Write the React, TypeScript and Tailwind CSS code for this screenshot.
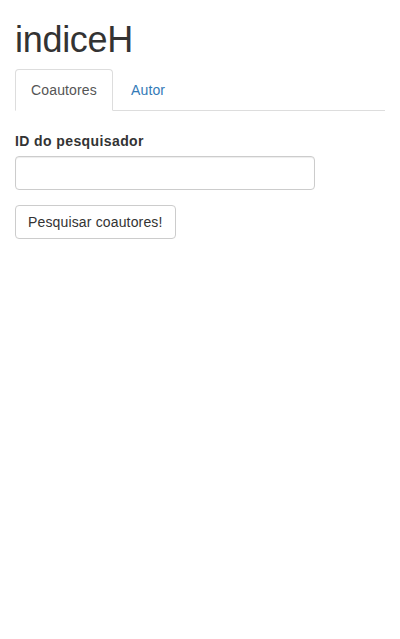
import React, { useState } from "react";

export default function App() {
  const [tab, setTab] = useState("coautores");

  return (
    <div className="min-h-screen bg-white text-[#333] font-['Liberation_Sans',Arial,sans-serif] text-[14px] leading-[20px]">
      <div className="px-[15px]">
        <h1 className="mt-[20px] mb-[10px] text-[36px] leading-[39px] font-normal tracking-[-0.3px]">indiceH</h1>

        {/* Tabs */}
        <ul className="flex border-b border-[#ddd] tracking-[0.15px]">
          <li className="-mb-px mr-[2px]">
            <button
              onClick={() => setTab("coautores")}
              className={
                tab === "coautores"
                  ? "block px-[15px] py-[10px] leading-[20px] rounded-t-[4px] border border-[#ddd] border-b-transparent bg-white text-[#555] cursor-default"
                  : "block px-[15px] py-[10px] leading-[20px] rounded-t-[4px] border border-transparent text-[#337ab7] hover:bg-[#eee]"
              }
            >
              Coautores
            </button>
          </li>
          <li className="-mb-px mr-[2px]">
            <button
              onClick={() => setTab("autor")}
              className={
                tab === "autor"
                  ? "block px-[15px] py-[10px] leading-[20px] rounded-t-[4px] border border-[#ddd] border-b-transparent bg-white text-[#555] cursor-default"
                  : "block px-[15px] py-[10px] leading-[20px] rounded-t-[4px] border border-transparent text-[#337ab7] hover:bg-[#eee]"
              }
            >
              Autor
            </button>
          </li>
        </ul>

        {/* Form */}
        <form className="pt-[20px] tracking-[0.15px]" onSubmit={(e) => e.preventDefault()}>
          <div className="mb-[15px]">
            <label className="block mb-[5px] font-bold tracking-[0.4px]">ID do pesquisador</label>
            <input
              type="text"
              className="block w-[300px] h-[34px] px-[12px] py-[6px] border border-[#ccc] rounded-[4px] shadow-[inset_0_1px_1px_rgba(0,0,0,0.075)] text-[#555] outline-none focus:border-[#66afe9]"
            />
          </div>
          <button
            type="submit"
            className="h-[34px] px-[12px] py-[6px] border border-[#ccc] rounded-[4px] bg-white text-[#333] hover:bg-[#e6e6e6]"
          >
            {tab === "coautores" ? "Pesquisar coautores!" : "Pesquisar autor!"}
          </button>
        </form>
      </div>
    </div>
  );
}
